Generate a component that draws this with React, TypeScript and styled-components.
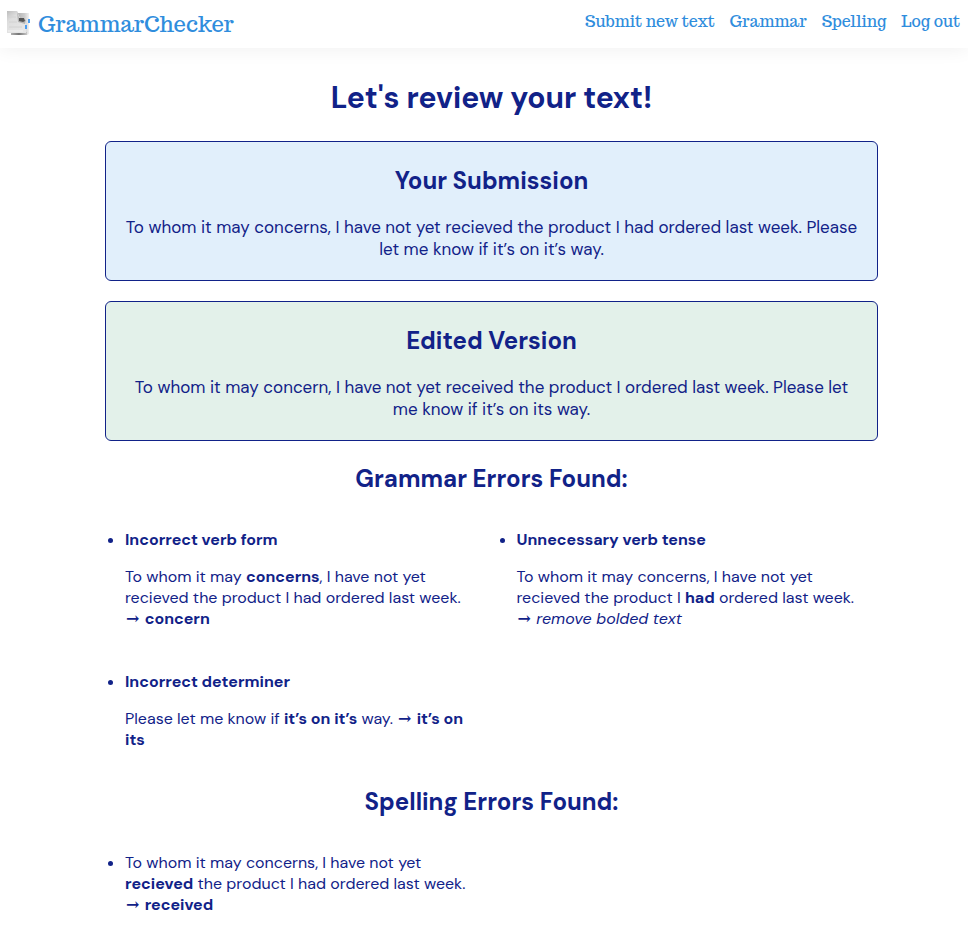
import React from "react";
import styled, { createGlobalStyle } from "styled-components";

const GlobalStyle = createGlobalStyle`
  * { box-sizing: border-box; }
  body {
    margin: 0;
    background: #fff;
    color: #112288;
    font-family: "DM Sans", Inter, sans-serif;
    font-size: 16px;
    line-height: 21px;
  }
`;

const Header = styled.header`
  display: flex;
  justify-content: space-between;
  align-items: center;
  min-height: 48px;
  padding: 0 8px 0 6px;
  background: #fff;
  box-shadow: 0 0 20px rgba(0, 0, 0, 0.07);
  font-family: "Special Elite", Trocchi, "Courier Prime", "Liberation Mono", monospace;
`;

const Brand = styled.a`
  display: flex;
  align-items: center;
  gap: 6px;
  color: #2f8ddd;
  font-size: 22px;
  line-height: 32px;
  text-decoration: none;
`;

const Nav = styled.nav`
  display: flex;
  gap: 15px;
  padding-bottom: 4px;
`;

const NavLink = styled.a`
  color: #2f8ddd;
  font-size: 16px;
  line-height: 20px;
  text-decoration: none;
  white-space: nowrap;
`;

const Main = styled.main`
  max-width: 1200px;
  margin: 0 90px 0 105px;
  padding-top: 30px;
`;

const Title = styled.h1`
  margin: 0 0 23px;
  font-size: 30px;
  line-height: 40px;
  text-align: center;
`;

const Panel = styled.section<{ $tone: string }>`
  margin-bottom: 20px;
  padding: 23px 16px 20px;
  border: 1px solid #112288;
  border-radius: 6px;
  background: ${({ $tone }) => $tone};
  text-align: center;
`;

const SectionTitle = styled.h2`
  margin: 0;
  font-size: 24px;
  line-height: 31px;
  text-align: center;
`;

const PanelText = styled.p`
  margin: 20px 0 0;
  font-size: 17px;
  line-height: 22px;
`;

const Errors = styled.section`
  padding-top: 2px;
`;

const ErrorList = styled.ul`
  display: grid;
  grid-template-columns: 1fr 1fr;
  column-gap: 30px;
  row-gap: 10px;
  margin: 0;
  padding: 19px 0 18px 20px;
`;

const ErrorItem = styled.li`
  padding: 16px 20px 0 0;
`;

const ErrorName = styled.h3`
  margin: 0 0 16px;
  font-size: 16px;
  line-height: 21px;
`;

const ErrorText = styled.p`
  margin: 0 0 16px;
`;

const Arrow = styled.span`
  padding: 0 1px;
  font-family: "DejaVu Serif", serif;
  font-weight: 700;
  line-height: 16px;
`;

function PaperIcon() {
  return (
    <svg width="26" height="26" viewBox="0 0 26 26" aria-hidden="true">
      <defs>
        <linearGradient id="sheet" x1="0" y1="0" x2="0.7" y2="1">
          <stop stopColor="#bdbdbd" />
          <stop offset="0.35" stopColor="#dedede" />
          <stop offset="1" stopColor="#e6e6e6" />
        </linearGradient>
        <linearGradient id="back" x2="1">
          <stop stopColor="#b5b5b5" />
          <stop offset="0.6" stopColor="#cdcdcd" />
          <stop offset="1" stopColor="#f0f0f0" />
        </linearGradient>
        <linearGradient id="shade" x2="1">
          <stop stopColor="#b0b0b0" />
          <stop offset="0.5" stopColor="#757575" />
          <stop offset="1" stopColor="#c8c8c8" />
        </linearGradient>
      </defs>
      <path d="M12 2h11v21l-2 1H12z" fill="url(#back)" />
      <path d="M5 21h16v3H5z" fill="url(#shade)" />
      <path d="M1 0h10l3 7 6 3v12H1z" fill="url(#sheet)" />
      <path d="M11 0l2 7 7 2-1 4-7-2z" fill="#b4b4b4" />
      <path d="M13 7h5l1 3-2 1-4-1z" fill="#555" />
      <path d="M3 6h7M3 11h8M3 16h13" stroke="#d2d2d2" />
      <path d="M2 20h15" stroke="#f2f2f2" />
      <path d="M22 8h2v4h-2zM19 14h2v4h-2z" fill="#4b9df0" />
    </svg>
  );
}

export default function App() {
  return (
    <>
      <GlobalStyle />
      <Header>
        <Brand href="#home">
          <PaperIcon />
          GrammarChecker
        </Brand>
        <Nav aria-label="Main">
          <NavLink href="#submit">Submit new text</NavLink>
          <NavLink href="#grammar">Grammar</NavLink>
          <NavLink href="#spelling">Spelling</NavLink>
          <NavLink href="#logout">Log out</NavLink>
        </Nav>
      </Header>
      <Main>
        <Title>Let's review your text!</Title>
        <Panel $tone="#e1effb">
          <SectionTitle>Your Submission</SectionTitle>
          <PanelText>
            To whom it may concerns, I have not yet recieved the product I had ordered last week. Please let me know
            if it’s on it’s way.
          </PanelText>
        </Panel>
        <Panel $tone="#e3f1ea">
          <SectionTitle>Edited Version</SectionTitle>
          <PanelText>
            To whom it may concern, I have not yet received the product I ordered last week. Please let me know if
            it’s on its way.
          </PanelText>
        </Panel>
        <Errors id="grammar">
          <SectionTitle>Grammar Errors Found:</SectionTitle>
          <ErrorList>
            <ErrorItem>
              <ErrorName>Incorrect verb form</ErrorName>
              <ErrorText>
                To whom it may <strong>concerns</strong>, I have not yet recieved the product I had ordered last
                week. <Arrow>→</Arrow> <strong>concern</strong>
              </ErrorText>
            </ErrorItem>
            <ErrorItem>
              <ErrorName>Unnecessary verb tense</ErrorName>
              <ErrorText>
                To whom it may concerns, I have not yet recieved the product I <strong>had</strong> ordered last
                week. <Arrow>→</Arrow> <em>remove bolded text</em>
              </ErrorText>
            </ErrorItem>
            <ErrorItem>
              <ErrorName>Incorrect determiner</ErrorName>
              <ErrorText>
                Please let me know if <strong>it’s on it’s</strong> way. <Arrow>→</Arrow>{" "}
                <strong>it’s on its</strong>
              </ErrorText>
            </ErrorItem>
          </ErrorList>
        </Errors>
        <Errors id="spelling">
          <SectionTitle>Spelling Errors Found:</SectionTitle>
          <ErrorList>
            <ErrorItem>
              <ErrorText>
                To whom it may concerns, I have not yet <strong>recieved</strong> the product I had ordered last
                week. <Arrow>→</Arrow> <strong>received</strong>
              </ErrorText>
            </ErrorItem>
          </ErrorList>
        </Errors>
      </Main>
    </>
  );
}
